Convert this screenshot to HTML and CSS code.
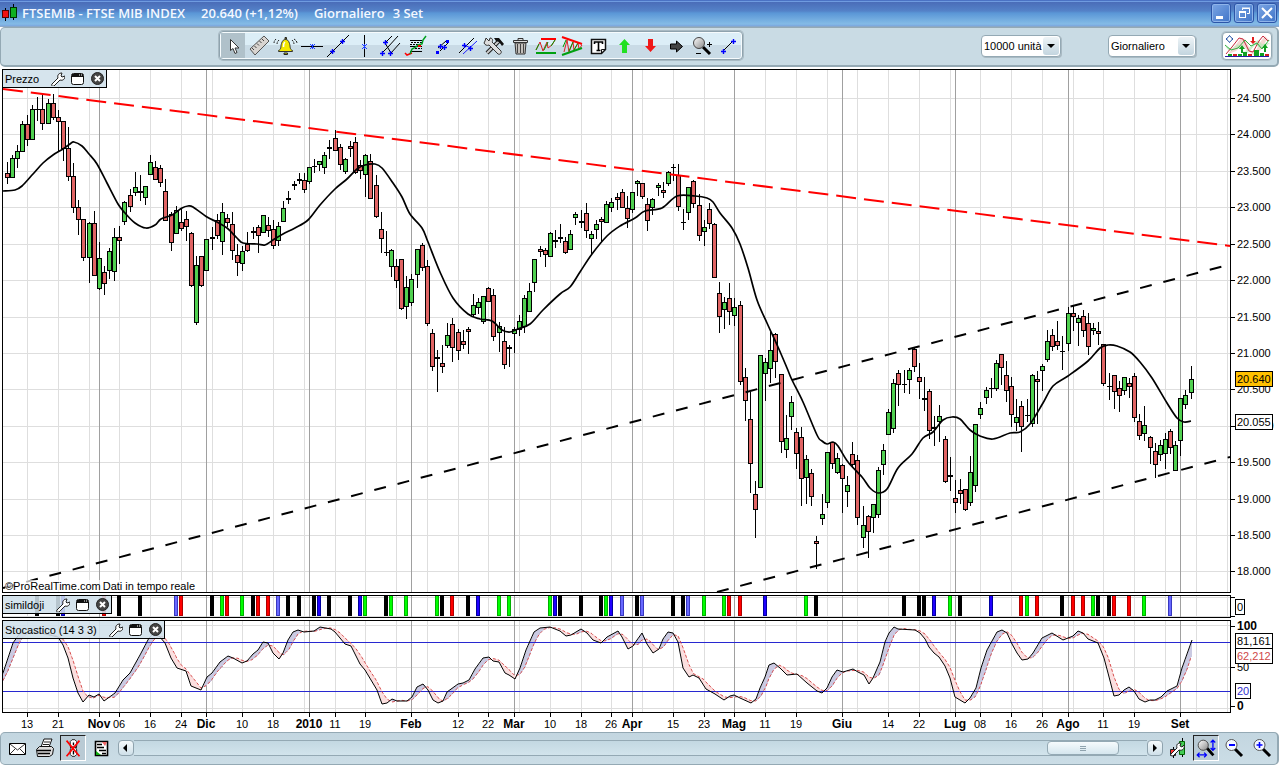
FILE: index.html
```html
<!DOCTYPE html>
<html lang="it">
<head>
<meta charset="utf-8">
<title>FTSEMIB - FTSE MIB INDEX</title>
<link rel="stylesheet" href="styles.css">
</head>
<body>
<svg class="defs" aria-hidden="true">
  <defs>
    <g id="plus" stroke="#0000ff" fill="none"><path d="M-2 .5h5M.5-2v5" stroke-width="1.4"/></g>
    <g id="star" stroke="#2040ff" fill="none"><path d="M-2-2l5 5M3-2l-5 5M.5-2v5"/></g>
    <g id="wrench"><path d="M2 13l6-6c-1-3 1-5 4-5l-1 3 1 1 3-1c0 3-2 5-5 4l-6 6c-2 1-3-1-2-2z" fill="#fff" stroke="#222"/></g>
    <g id="window"><rect x="1.500" y="2.500" width="12" height="11" rx="2" fill="#fff" stroke="#111"/><path d="M2 3h11v3H2z" fill="#111"/><path d="M9 4h1M11 4h1" stroke="#fff"/></g>
    <g id="close"><circle cx="7.500" cy="7.500" r="6" fill="#444" stroke="#222"/><path d="M5 5l5 5M10 5l-5 5" stroke="#fff" stroke-width="2"/></g>
    <linearGradient id="lens" x1="0" y1="0" x2="1" y2="1"><stop offset="0" stop-color="#fff"/><stop offset="1" stop-color="#888"/></linearGradient>
  </defs>
</svg>

<header class="titlebar">
  <svg class="app-icon" width="18" height="20" viewBox="0 0 18 20"><path d="M3.500 5v13M11.500 1v16" stroke="#000"/><rect x=".5" y="7.500" width="6" height="7" fill="#f01010" stroke="#500"/><rect x="8.500" y="4.500" width="6" height="10" fill="#10b020" stroke="#030"/></svg>
  <h1 class="title"><span>FTSEMIB - FTSE MIB INDEX</span><span>20.640 (+1,12%)</span><span>Giornaliero</span></h1>
  <span class="title date">3 Set</span>
  <div class="window-buttons">
    <button class="win" aria-label="Riduci"><svg width="18" height="18" viewBox="0 0 18 18"><path d="M4 13.500h7" stroke="#fff" stroke-width="3"/></svg></button>
    <button class="win" aria-label="Ripristina"><svg width="18" height="18" viewBox="0 0 18 18" fill="none" stroke="#fff"><path d="M7.500 6V4.500h7v5H12M7 4h8" /><rect x="4.500" y="8.500" width="6" height="5"/><path d="M4 8h7" stroke-width="2"/></svg></button>
    <button class="win" aria-label="Chiudi"><svg width="18" height="18" viewBox="0 0 18 18"><path d="M4 4l10 10M14 4L4 14" stroke="#fff" stroke-width="2"/></svg></button>
  </div>
</header>

<nav class="toolbar">
  <div class="tools">
    <button class="tool on" aria-label="Puntatore"><svg viewBox="0 0 26 25"><path d="M9.500 6.500v11l2.500-2 2 5 2-1-2-4.500h4z" fill="#fff" stroke="#333"/></svg></button>
    <button class="tool" aria-label="Righello"><svg viewBox="0 0 26 25"><path d="M3 16L17 3l5 5L8 22z" fill="#d8d4d0" stroke="#555"/><path d="M5 15l2 2M7.500 13l2 2M10 10.500l2 2M12.500 8l2 2M15 6l2 2" stroke="#444"/></svg></button>
    <button class="tool" aria-label="Allarme"><svg viewBox="0 0 26 25"><path d="M5.500 17.500c3-1 2-4 3-7 1-3 2-4 4-4s3 1 4 4c1 3 0 6 3 7v1h-14z" fill="#f4e800" stroke="#333"/><path d="M10.500 14c0-3 0-4 1.500-5" stroke="#fff" stroke-width="1.500" fill="none"/><path d="M12 4.500h1.500V6H12zM11 20h3.500v1.500H11z" fill="#dd0" stroke="#222"/><path d="M6 7c-1 1-2 2-2 4M3 6C2 7 1 8 1 10M19 7c1 1 2 2 2 4M21 6c2 1 3 3 3 4" fill="none" stroke="#222" stroke-dasharray="2 1"/></svg></button>
    <button class="tool" aria-label="Linea orizzontale"><svg viewBox="0 0 26 25"><path d="M2 13.500h22" stroke="#000"/><use href="#star" x="13" y="13"/></svg></button>
    <button class="tool" aria-label="Linea di tendenza"><svg viewBox="0 0 26 25"><path d="M2 24L24 2" stroke="#000"/><use href="#plus" x="7" y="18"/><use href="#plus" x="17" y="8"/></svg></button>
    <button class="tool" aria-label="Linea verticale"><svg viewBox="0 0 26 25"><path d="M13.500 2v22" stroke="#000"/><use href="#star" x="13" y="13"/></svg></button>
    <button class="tool" aria-label="Forchetta"><svg viewBox="0 0 26 25"><path d="M8 10l7-7M11 14L21 3M5 20l6-6M14 20L23 10M8 10l6 10" stroke="#000" fill="none"/><use href="#plus" x="8" y="9"/><use href="#plus" x="5" y="20"/><use href="#plus" x="13" y="20"/></svg></button>
    <button class="tool" aria-label="Ritracciamenti"><svg viewBox="0 0 26 25"><path d="M7 7.500h12M7 13.500h12M7 18.500h12" stroke="#000"/><path d="M8 9.500h11M7 11.500h10M9 15.500h10" stroke="#000" stroke-dasharray="2 1"/><path d="M2 20l2 2 5-2" stroke="#f00" stroke-width="1.500" fill="none"/><path d="M7 21l2-5 4-2 2-2 4-1 1-4 3-4" stroke="#00a020" stroke-width="1.500" fill="none"/><path d="M15 13h3" stroke="#f00" stroke-width="2"/></svg></button>
    <button class="tool" aria-label="Segmento"><svg viewBox="0 0 26 25"><path d="M9 15l8-7M11 18l8-8" stroke="#000"/><path d="M17 7h3v3h-3zM7 18h3v3H7z" fill="#00f"/><use href="#plus" x="11" y="13"/><use href="#plus" x="15" y="14"/></svg></button>
    <button class="tool" aria-label="Parallele"><svg viewBox="0 0 26 25"><path d="M4 20L19 5" stroke="#000"/><path d="M8 21L22 8" stroke="#22f"/><path d="M9 12l7 3" stroke="#22f"/><use href="#plus" x="9" y="12"/><use href="#plus" x="15" y="15"/></svg></button>
    <button class="tool" aria-label="Impostazioni"><svg viewBox="0 0 26 25"><path d="M6 20L18 8" stroke="#222" stroke-width="4"/><path d="M6 20L18 8" stroke="#ccc" stroke-width="2"/><path d="M13 5l5 0 5 6-2 2-3-4-3-1z" fill="#111"/><path d="M4 8l1-3 3 3 1-3c3 0 3 3 2 4l9 9c1 2-1 4-3 3l-9-9c-2 1-4 0-5-2z" fill="#ddd" stroke="#333"/></svg></button>
    <button class="tool" aria-label="Elimina"><svg viewBox="0 0 26 25"><path d="M8 10h11l-1 11H9z" fill="#c4c0bc" stroke="#333"/><path d="M6.500 7.500h14v2h-14zM11 7V5.500h5V7" fill="#ddd" stroke="#333"/><path d="M10.500 11v9M13.500 11v9M16.500 11v9" stroke="#444"/></svg></button>
    <button class="tool" aria-label="Supporti e resistenze"><svg viewBox="0 0 26 25"><path d="M3 17l4-8 3 9 4-9 1 6 4-3 3-5" stroke="#d22" fill="none"/><path d="M3 17l3-6M11 17l4-8M18 13l4-6" stroke="#090"/><path d="M8 6h15" stroke="#f00" stroke-width="2"/><path d="M3 20h20" stroke="#00a010" stroke-width="2"/></svg></button>
    <button class="tool" aria-label="Triangoli"><svg viewBox="0 0 26 25"><path d="M5 19l3-12 2 12 4-10 1 8 4-7 1 6 3-4" stroke="#d22" fill="none"/><path d="M4 14l3-7M10 18l4-9M15 17l4-7" stroke="#090"/><path d="M3 4l20 7" stroke="#f00" stroke-width="2"/><path d="M3 22l20-7" stroke="#00a010" stroke-width="2"/></svg></button>
    <button class="tool" aria-label="Testo"><svg viewBox="0 0 26 25"><path d="M6.500 6.500h14v10l-4 4h-10z" fill="#fff" stroke="#111" stroke-width="1.500"/><path d="M16.500 20v-3.500H20" fill="none" stroke="#111"/><path d="M9.500 11V9h8v2M13.500 9v8M11.500 17.500h4" fill="none" stroke="#000" stroke-width="1.600"/></svg></button>
    <button class="tool" aria-label="Freccia su"><svg viewBox="0 0 26 25"><path d="M13.500 6l5.500 6h-3v8h-5v-8H8z" fill="#22e022"/></svg></button>
    <button class="tool" aria-label="Freccia giù"><svg viewBox="0 0 26 25"><path d="M13.500 19L8 13h3V6h5v7h3z" fill="#f01818"/></svg></button>
    <button class="tool" aria-label="Freccia destra"><svg viewBox="0 0 26 25"><path d="M7.500 11h6V8l6 5.500-6 5.500v-3h-6z" fill="#444" stroke="#000"/></svg></button>
    <button class="tool" aria-label="Zoom"><svg viewBox="0 0 26 25"><path d="M14 14l7 7" stroke="#000" stroke-width="3"/><circle cx="10" cy="10" r="5.500" fill="url(#lens)" stroke="#444"/><path d="M18 11.500h5M20.500 9v5M7 20.500h5" stroke="#000"/></svg></button>
    <button class="tool" aria-label="Misura"><svg viewBox="0 0 26 25"><path d="M8 18l10-10" stroke="#000"/><use href="#plus" x="8" y="18"/><use href="#plus" x="18" y="8"/></svg></button>
  </div>
  <label class="pick units"><select aria-label="Unità"><option>10000 unità</option></select><span class="arrow"></span></label>
  <label class="pick period"><select aria-label="Periodo"><option>Giornaliero</option></select><span class="arrow"></span></label>
  <button class="indicators" aria-label="Aggiungi indicatore">
    <svg width="46" height="24" viewBox="0 0 46 24"><path d="M4 20l6-7 7-9 4 1 6 12 4 1 6-11 4-5 5 5-4 0-5 9-7 5-6-4-6-6-6 6z" fill="#f0c8c0" opacity=".7"/><path d="M1 12l6 3 7-5 6 8 7-6 7-6 4 4 8-1-8 6-7-4-7 8-6-3-7-3-6 4z" fill="#b8e8b8" opacity=".7"/><path d="M2 20l6-7 7-9 4 1 6 12 4 1 6-11 4-5 5 5" fill="none" stroke="#c8283c"/><path d="M1 11l6 5 7-2 7-8 6 6 6-3 5 6 7-9" fill="none" stroke="#30b040"/><path d="M5.500 1.500l1.500 2 2 1.500-2 1.500-1.500 2L4 6.500 2 5l2-1.500z" fill="#fff" stroke="#1848a0"/><path d="M18 11l3 4h-2v4h-2v-4h-2zM41 10l3 4h-2v4h-2v-4h-2z" fill="#10a020"/><path d="M29 10l-3-3h2V3h2v4h2z" fill="#e02020"/><path d="M4 20h4v2H4zM14 20h4v2h-4zM19 18h4v4h-4zM30 16h5v6h-5zM36 19h4v3h-4z" fill="#10a020"/><path d="M9 20h4v2H9zM24 20h4v2h-4zM41 20h4v2h-4z" fill="#d02020"/><path d="M1 22.500h44" stroke="#2020a0"/></svg>
  </button>
</nav>

<main class="charts">
  <section class="row price">
    <div class="panel">
      <svg id="price" viewBox="3 70 1227 522" preserveAspectRatio="none"></svg>
      <div class="chip"><span>Prezzo</span><button aria-label="Configura"><svg viewBox="0 0 15 15"><use href="#wrench"/></svg></button><button aria-label="Finestra"><svg viewBox="0 0 15 15"><use href="#window"/></svg></button><button aria-label="Chiudi"><svg viewBox="0 0 15 15"><use href="#close"/></svg></button></div>
      <p class="credit"><span>©ProRealTime.com</span><span>Dati in tempo reale</span></p>
    </div>
    <div class="yaxis" id="price-axis"></div>
  </section>
  <section class="row doji">
    <div class="panel">
      <svg id="doji" viewBox="3 596 1227 21" preserveAspectRatio="none"></svg>
      <div class="chip"><span>simildoji</span><button aria-label="Configura"><svg viewBox="0 0 15 15"><use href="#wrench"/></svg></button><button aria-label="Finestra"><svg viewBox="0 0 15 15"><use href="#window"/></svg></button><button aria-label="Chiudi"><svg viewBox="0 0 15 15"><use href="#close"/></svg></button></div>
    </div>
    <div class="yaxis" id="doji-axis"></div>
  </section>
  <section class="row stoch">
    <div class="panel">
      <svg id="stoch" viewBox="3 621 1227 91" preserveAspectRatio="none"></svg>
      <div class="chip"><span>Stocastico (14 3 3)</span><button aria-label="Configura"><svg viewBox="0 0 15 15"><use href="#wrench"/></svg></button><button aria-label="Finestra"><svg viewBox="0 0 15 15"><use href="#window"/></svg></button><button aria-label="Chiudi"><svg viewBox="0 0 15 15"><use href="#close"/></svg></button></div>
    </div>
    <div class="yaxis" id="stoch-axis"></div>
  </section>
  <div class="row"><div class="xaxis" id="xaxis"></div></div>
</main>

<footer class="bottombar">
  <button class="foot" aria-label="Invia"><svg viewBox="0 0 26 26"><path d="M5.500 8.500h16v11h-16z" fill="#fff" stroke="#000"/><path d="M6 9l7.500 6L21 9M6 19l5-5M21 19l-5-5" fill="none" stroke="#333"/></svg></button>
  <button class="foot" aria-label="Stampa"><svg viewBox="0 0 26 26"><path d="M9 12l3-8h8l-3 8z" fill="#fff" stroke="#111"/><path d="M12 7h6M11 9.500h6" stroke="#222"/><path d="M4.500 14.500l3-3h12l2 2-1 6-3 2h-12z" fill="#ddd" stroke="#111"/><path d="M5 15.500h14M6 18.500h12" stroke="#000" stroke-width="1.400"/></svg></button>
  <button class="foot on" aria-label="Ordini disattivati"><svg viewBox="0 0 26 26"><path d="M10 6l2-2h3l2 2v5l-1 2 1 2v5l-2 2h-3l-2-2v-5l1-2-1-2z" fill="#fff" stroke="#111"/><path d="M13.500 7v3M13.500 16v4M10 12h7" stroke="#000" stroke-width="1.500"/><path d="M6 5l14 17M20 5L6 22" stroke="#f00" stroke-width="1.800"/></svg></button>
  <button class="foot report" aria-label="Rapporto"><svg viewBox="0 0 26 26"><path d="M6.500 6.500h12v14h-12z" fill="#fff" stroke="#000" stroke-width="1.600"/><path d="M8 9.500h5M8 12.500h7M10 15.500h7M13 18.500h4" stroke="#000" stroke-width="1.400"/><path d="M13 7h5l-2 4z" fill="#e66"/><path d="M7 20v-4l5 4z" fill="#1a1"/></svg></button>
  <div class="scroller">
    <button class="step" aria-label="Indietro"><svg viewBox="0 0 14 14"><path d="M8 3v8L4 7z"/></svg></button>
    <div class="track"><span class="thumb"></span></div>
    <button class="step" aria-label="Avanti"><svg viewBox="0 0 14 14"><path d="M5 3v8l4-4z"/></svg></button>
  </div>
  <button class="foot" aria-label="Colori"><svg viewBox="0 0 26 26"><path d="M17.500 3v19M8.500 12v11" stroke="#000"/><path d="M14.500 6.500h5v13h-5z" fill="#4c5" stroke="#060"/><path d="M5.500 14.500h5v6h-5z" fill="#f33" stroke="#222"/><path d="M6 19l6-6c-1-4 1-5 4-5l-1 3 2 1 2-2c1 4-2 6-5 5l-6 6c-2 0-3-1-2-2z" fill="#fff" stroke="#222"/></svg></button>
  <button class="foot on" aria-label="Adatta zoom"><svg viewBox="0 0 26 26"><path d="M14 13l7 8" stroke="#000" stroke-width="3"/><circle cx="10" cy="10" r="5.500" fill="url(#lens)" stroke="#444"/><path d="M4 20.500h9M6 18l-2.500 2.500L6 23M11 18l2.500 2.500L11 23M20.500 5v10M18 7l2.500-2.500L23 7M18 13l2.500 2.500L23 13" fill="none" stroke="#00f" stroke-width="1.400"/></svg></button>
  <button class="foot" aria-label="Riduci zoom"><svg viewBox="0 0 26 26"><path d="M14 14l7 7" stroke="#000" stroke-width="3"/><circle cx="10.500" cy="10" r="5.500" fill="#f4f8ff" stroke="#555"/><path d="M8 10h6" stroke="#00f" stroke-width="2"/></svg></button>
  <button class="foot" aria-label="Aumenta zoom"><svg viewBox="0 0 26 26"><path d="M14 14l7 7" stroke="#000" stroke-width="3"/><circle cx="10.500" cy="10" r="5.500" fill="#f4f8ff" stroke="#555"/><path d="M7.500 10h6M10.500 7v6" stroke="#00f" stroke-width="1.600"/></svg></button>
</footer>
<script src="chart.js"></script>
</body>
</html>
```

FILE: styles.css
```css
* { box-sizing: border-box; }
html, body { height: 100%; }
body {
  margin: 0;
  display: flex;
  flex-direction: column;
  background: #fff;
  color: #000;
  font: 11px/14px "Liberation Sans", Arial, sans-serif;
}
button { margin: 0; padding: 0; border: 0; background: none; font: inherit; color: inherit; display: block; }
svg { display: block; }
.defs { position: absolute; width: 0; height: 0; }

.titlebar {
  flex: none;
  height: 27px;
  display: flex;
  align-items: center;
  gap: 2px;
  padding: 0 2px;
  border-bottom: 1px solid #8aa8c8;
  background: linear-gradient(#4a72c4 0 1px, #6f9be0 1px 2px, #4a6cb8 2px, #5482c8 11px, #5a96d6 13px, #84bbe6 24px, #7ba6de 26px);
}
.title {
  margin: 0;
  display: flex;
  gap: 16px;
  color: #f4f8ff;
  font: 600 13px/18px "Open Sans", "Noto Sans", sans-serif;
  white-space: pre;
}
.date { margin-left: 6px; }
.window-buttons { margin-left: auto; display: flex; gap: 3px; }
.win { width: 20px; height: 20px; border: 1px solid #2c55a8; border-radius: 3px; background: linear-gradient(135deg, #7ca6e4, #3f74c8); box-shadow: inset 0 0 0 1px #8fb4ea; }

.toolbar {
  flex: none;
  height: 40px;
  display: flex;
  align-items: center;
  padding: 0 5px 2px 218px;
  border: 2px solid #94a9b4;
  border-width: 1px 2px 2px 1px;
  border-radius: 5px;
  background: #c9dbe4;
}
.tools {
  display: flex;
  border: 1px solid #8fa3ae;
  border-radius: 4px;
  box-shadow: inset 0 0 0 1px #f6fbfd, 0 0 0 1px #a9bac3;
  background: linear-gradient(#dceef7 50%, #c9dbe6 50%);
  padding: 1px;
}
.tool { width: 26px; height: 25px; }
.tool svg { width: 26px; height: 25px; }
.tool.on { background: linear-gradient(90deg, #b0c1ca 24px, transparent 24px); }
.pick {
  display: grid;
  align-items: center;
  height: 22px;
  border: 1px solid #94a9b4;
  border-radius: 4px;
  background: #fff;
  box-shadow: 1px 1px 0 #a9bac3;
}
.pick select {
  grid-area: 1 / 1;
  appearance: none;
  width: 100%;
  height: 20px;
  border: 0;
  padding: 0 0 0 2px;
  background: none;
  font: inherit;
  color: #000;
}
.arrow {
  grid-area: 1 / 1;
  justify-self: end;
  width: 16px;
  height: 18px;
  margin-right: 1px;
  border-radius: 3px;
  background: linear-gradient(#eef4f7, #c3d5df);
  pointer-events: none;
  display: grid;
  place-items: center;
}
.arrow::before { content: ""; border: 4px solid transparent; border-top-color: #000; border-bottom: 0; }
.units { width: 80px; margin-left: auto; margin-right: 47px; }
.period { width: 88px; margin-right: 26px; }
.indicators { padding: 1px; border: 1px solid #94a9b4; border-radius: 4px; background: #fff; box-shadow: 0 0 0 1px #b5c5ce; }

.charts { flex: 1; min-height: 0; display: flex; flex-direction: column; gap: 2px; padding: 2px 0 0 2px; }
.row { display: grid; grid-template-columns: minmax(0, 1fr) 48px; }
.price { flex: 1; min-height: 0; }
.doji { height: 23px; }
.stoch { height: 93px; margin-bottom: -2px; }
.panel { position: relative; border: 1px solid #000; min-height: 0; overflow: hidden; }
.panel > svg { width: 100%; height: 100%; position: absolute; inset: 0; }
.chip {
  position: absolute;
  top: 0;
  left: 0;
  height: 18px;
  display: flex;
  align-items: center;
  gap: 5px;
  padding: 0 1px 0 2px;
  border-right: 1px solid #000;
  border-bottom: 1px solid #000;
  background: #d0e0ebe0;
}
.chip span { margin-right: 6px; }
.chip svg { width: 15px; height: 15px; }
.credit { position: absolute; left: 2px; bottom: 0; margin: 0; line-height: 12px; display: flex; gap: 2px; }
.credit span { background: #ffffffb0; }

.yaxis { position: relative; }
.tick { position: absolute; left: 0; height: 14px; margin-top: -7px; padding-left: 6px; }
.tick::before { content: ""; position: absolute; left: 0; top: 7px; width: 4px; height: 1px; background: #000; }
.tick.strong { font-weight: bold; font-size: 12px; }
.tag { position: absolute; left: 4px; height: 16px; margin-top: -8px; padding: 0 1px; border: 1px solid #000; background: #fff; }
.tag.gold { background: #ffc000; }
.tag.red { color: #d04848; }
.tag.blue { color: #3030d0; }

.xaxis { position: relative; height: 19px; }
.date-tick { position: absolute; top: 0; width: 40px; margin-left: -20px; padding-top: 4px; text-align: center; }
.date-tick::before { content: ""; position: absolute; left: 20px; top: 0; width: 1px; height: 4px; background: #000; }
.date-tick.strong { font-weight: bold; font-size: 12px; }

.bottombar {
  flex: none;
  height: 33px;
  display: flex;
  align-items: center;
  gap: 2px;
  padding: 0 2px 2px 3px;
  border: 1px solid #94a9b4;
  border-right-width: 2px;
  border-radius: 5px;
  background: linear-gradient(#c3d6e0, #cbdde6);
}
.foot { width: 26px; height: 26px; }
.foot svg { width: 26px; height: 26px; }
.foot.on { border: 1px solid; border-color: #222 #fff #fff #222; background: #b9cad4; }
.foot.on svg { width: 24px; height: 24px; }
.report { margin: 0 1px; }
.scroller { flex: 1; display: flex; align-items: center; }
.step { width: 16px; height: 16px; border: 1px solid #8fa3ae; border-radius: 4px; background: linear-gradient(#f4f9fb, #cfe0e9); }
.step svg { width: 14px; height: 14px; }
.track { flex: 1; height: 16px; border: solid #94a9b4; border-width: 1px 0; background: linear-gradient(#c3d8e2, #d2e4ec); display: flex; align-items: center; justify-content: flex-end; padding-right: 28px; }
.thumb {
  width: 72px;
  height: 14px;
  border: 1px solid #94a9b4;
  border-radius: 4px;
  background: linear-gradient(#8fa3ae, #8fa3ae) center 4px / 6px 1px no-repeat, linear-gradient(#8fa3ae, #8fa3ae) center 6px / 6px 1px no-repeat, linear-gradient(#8fa3ae, #8fa3ae) center 8px / 6px 1px no-repeat, linear-gradient(#f6fbfd, #d5e6ee);
}
```

FILE: chart.js
```js
// Candles: x, high, body top, body bottom, low, kind (g up, r down, d doji, t thin doji)
const CANDLES = `
7 162 173 178 184 r|12 155 158 178 178 g|17 145 151 159 168 g|22 121 124 152 152 g|27 115 124 140 146 r|32 105 109 140 140 g|37 97 109 109 121 t|42 93 109 124 130 r|48 99 103 124 124 g|53 94 103 118 120 r|58 110 117 122 152 r|63 121 121 149 161 r|68 127 148 177 181 r|73 163 176 208 213 r|78 200 207 220 235 r|83 219 219 258 261 r|89 222 223 258 283 g|94 211 223 276 276 r|99 242 258 289 290 g|104 266 272 284 295 r|109 248 251 271 279 g|114 228 237 272 281 g|119 226 237 241 264 r|124 201 202 222 225 g|130 189 195 207 212 r|135 172 187 193 196 g|140 175 192 192 201 d|145 186 186 198 205 g|150 155 162 175 175 g|155 161 167 180 180 r|160 165 168 183 187 r|165 179 191 221 221 r|171 212 214 243 251 r|176 206 210 234 234 g|181 209 222 229 231 r|186 211 219 227 241 r|191 232 233 286 287 r|196 256 265 323 325 g|201 256 256 286 287 r|206 239 239 271 271 g|212 227 238 238 250 d|217 214 220 236 239 r|222 203 212 242 255 g|227 214 218 223 227 r|232 212 224 251 260 r|237 244 255 263 276 r|242 246 251 264 271 g|247 232 244 251 252 r|253 227 232 232 239 d|258 225 227 236 253 r|263 215 215 233 233 g|268 217 225 231 237 r|273 220 229 246 249 r|278 222 226 241 246 g|283 201 208 222 222 g|288 191 199 199 204 d|294 181 185 185 190 d|299 173 180 180 184 d|304 173 180 190 193 r|309 167 167 182 184 g|314 159 166 166 173 t|319 161 161 165 171 g|324 152 155 168 174 g|329 140 148 148 159 d|335 130 138 151 151 r|340 144 147 165 170 r|345 158 159 172 174 g|350 141 146 149 157 r|355 137 142 173 174 r|360 160 165 171 179 r|365 154 155 175 197 g|370 154 161 199 199 r|376 175 185 217 218 r|381 212 229 239 253 r|386 231 252 252 256 t|391 249 250 267 277 g|396 259 266 281 288 r|401 259 259 309 310 r|406 276 287 307 319 g|411 274 279 303 306 g|417 249 249 275 288 g|422 243 245 268 271 r|427 260 266 324 326 r|432 329 333 367 371 r|437 350 358 358 392 d|442 345 363 367 373 r|447 323 335 346 348 g|452 318 324 348 362 r|458 329 332 351 360 r|463 330 341 345 349 r|468 327 329 332 354 r|473 294 305 315 317 g|478 298 302 308 314 g|483 296 296 322 324 g|488 287 288 302 302 r|493 289 295 337 341 r|499 322 326 333 352 g|504 327 341 365 369 r|509 345 348 348 367 d|514 327 329 334 353 g|519 315 321 330 336 g|524 295 298 327 333 g|529 283 291 312 312 g|534 259 259 283 292 g|540 246 249 252 257 r|545 248 250 255 267 r|550 232 233 257 257 g|555 230 241 241 248 d|560 224 238 238 243 d|565 237 241 253 254 r|570 230 234 250 250 g|575 212 214 218 225 g|581 210 222 222 228 d|586 203 213 231 238 r|591 231 234 239 254 g|596 220 224 230 239 g|601 217 219 222 242 r|606 201 204 223 223 g|611 198 202 208 212 g|617 193 197 200 210 r|622 189 192 208 208 r|627 196 208 219 228 r|632 192 192 210 213 g|637 180 181 184 196 g|642 183 183 197 199 r|647 198 204 221 231 r|652 198 199 208 215 g|658 183 185 188 196 g|663 182 190 193 198 r|668 171 172 184 186 g|673 164 167 167 181 t|678 164 175 207 211 r|683 209 222 222 230 t|688 187 187 213 220 g|693 180 181 204 208 r|699 194 205 236 241 r|704 220 227 232 246 g|709 203 209 224 229 r|714 223 224 278 278 r|719 282 293 317 333 r|724 297 302 310 329 g|729 283 298 312 325 r|734 298 307 316 326 g|740 301 305 382 385 r|745 368 377 401 421 r|750 392 419 464 493 r|755 481 494 510 538 r|760 355 355 488 488 g|765 358 362 374 401 g|770 332 350 369 383 g|775 333 334 362 378 r|781 374 374 442 453 r|786 415 438 450 458 g|791 396 402 417 430 g|796 428 432 454 469 r|801 427 437 479 506 r|806 455 459 478 504 g|811 469 473 497 506 r|816 536 541 544 569 r|822 494 514 519 525 g|827 452 452 503 508 g|832 442 442 464 469 r|837 453 458 473 474 g|842 464 465 479 513 r|847 476 485 492 507 g|852 442 454 465 467 r|857 455 460 518 525 r|863 506 525 538 548 g|868 515 516 532 558 r|873 504 504 518 533 g|878 467 470 515 518 g|883 444 450 465 475 g|888 409 412 435 435 g|893 379 383 429 433 g|898 370 373 385 406 r|904 370 384 384 393 t|909 368 370 380 394 g|914 347 349 367 372 r|919 363 377 382 399 r|924 377 399 399 411 d|929 389 391 431 439 r|934 416 428 428 446 d|939 405 416 422 442 g|945 436 439 482 483 r|950 457 476 476 491 d|955 480 498 503 513 r|960 479 490 494 504 r|965 489 489 510 511 r|970 456 472 503 506 g|975 424 424 486 492 g|980 402 408 415 419 g|986 387 390 398 404 g|991 378 388 388 398 t|996 360 363 389 391 g|1001 354 354 368 385 r|1006 361 375 391 402 r|1011 377 386 415 427 r|1016 399 417 423 431 g|1021 401 406 427 452 r|1027 399 415 415 422 t|1032 374 375 424 427 g|1037 371 379 382 424 r|1042 364 366 371 391 g|1047 330 341 360 362 g|1052 329 335 347 351 r|1057 321 341 346 350 r|1062 336 351 351 370 t|1068 307 313 344 351 g|1073 306 313 317 331 r|1078 315 318 323 346 g|1083 310 316 331 337 r|1088 313 323 347 355 r|1093 323 328 331 335 g|1098 322 331 334 345 r|1103 344 344 384 386 r|1109 373 386 386 400 t|1114 375 375 392 409 r|1119 381 388 396 412 r|1124 377 377 391 395 g|1129 378 383 387 398 r|1134 373 376 418 422 r|1139 414 421 436 440 r|1144 406 425 434 441 g|1150 436 437 448 464 r|1155 443 451 465 478 r|1160 440 445 455 461 g|1165 433 439 454 469 g|1170 429 431 448 454 r|1175 441 445 471 471 g|1180 398 398 441 456 g|1185 390 395 405 409 g|1191 366 379 393 399 g`;

const AVERAGE = "3,191 15,190 22,186 33,174 43,163 53,155 63,149 70,144 74,142 82,146 89,154 97,164 107,183 118,204 125,213 135,223 146,228 155,225 161,219 172,215 182,208 188,206 193,207 207,217 217,222 227,228 237,238 243,243 257,244 265,245 273,240 283,234 295,228 308,220 320,205 335,189 347,179 357,169 365,165 375,164 382,168 393,183 402,197 410,214 422,228 428,242 440,272 453,298 468,314 480,319 492,321 502,330 510,332 518,329 530,324 543,310 560,294 570,287 580,272 592,254 607,236 620,226 635,218 645,211 662,208 677,196 695,196 707,198 713,202 720,213 732,228 740,244 748,268 757,300 767,323 778,347 787,368 792,380 803,402 817,435 822,441 827,444 833,442 838,446 848,462 862,477 870,488 878,493 887,489 898,468 912,454 923,438 933,432 943,420 952,417 960,419 970,430 980,436 993,439 1010,433 1020,432 1030,424 1043,403 1053,386 1068,376 1088,361 1100,348 1108,345 1117,346 1130,352 1140,362 1152,378 1167,403 1177,418 1184,422 1191,421";

const STOCH = "-12,690 -7,688 3,673 13,643 20,633 33,632 45,634 58,637 63,645 68,658 73,678 78,693 83,702 89,695 94,697 99,694 104,701 115,693 123,680 130,673 140,655 149,638 153,634 159,636 165,643 171,658 177,668 186,671 191,686 201,690 207,677 212,673 220,662 228,656 233,658 242,663 247,661 253,654 258,650 263,642 268,643 273,653 279,659 283,653 288,640 293,632 298,630 304,632 314,631 320,627 331,629 335,632 345,644 351,646 360,664 365,670 377,690 382,704 387,703 392,699 397,701 407,701 412,697 417,687 423,684 428,690 433,700 438,703 443,701 447,692 458,684 463,683 469,680 475,669 483,658 489,657 493,661 499,662 505,673 509,675 515,679 520,668 526,650 534,632 540,628 550,627 560,631 566,636 571,635 581,629 587,633 593,640 601,643 607,637 618,631 622,637 628,649 633,646 637,640 642,633 647,644 653,653 659,649 663,639 668,632 673,633 678,642 683,668 689,677 693,675 699,678 706,689 715,694 724,700 730,696 734,695 740,698 751,703 756,699 760,688 765,677 769,665 774,663 780,668 787,675 797,674 807,683 817,691 822,693 827,688 832,677 837,670 843,672 853,669 858,672 864,675 869,684 873,678 880,662 885,642 889,633 894,627 898,629 915,630 920,633 925,639 929,647 934,653 939,657 945,666 950,678 955,697 965,703 970,698 976,688 981,668 987,650 997,632 1002,630 1007,633 1012,644 1017,653 1022,660 1028,659 1033,653 1042,638 1052,633 1063,640 1073,636 1078,631 1083,633 1088,639 1098,643 1104,658 1108,673 1114,696 1119,695 1124,690 1129,687 1134,691 1139,699 1145,702 1150,700 1155,700 1161,697 1167,691 1177,686 1182,668 1192,640";

const DOJI = "37k 58k 63b 104r 119k 140k 176l 181r 212k 222g 227r 242g 253k 258r 268r 278l 288k 299k 314k 319b 329k 350k 360b 365g 386k 391g 406g 437g 442k 452r 468k 478b 499g 509g 550g 555b 560k 581k 601k 606g 611b 622l 637k 642l 673k 683k 688l 704g 724g 729r 740r 765b 806g 816k 904k 919k 924k 934b 950g 960k 991b 1021r 1027g 1037r 1062k 1073r 1083r 1093g 1098k 1109k 1114r 1129r 1144g 1170l";

const LIGHT = [27, 58, 89, 119, 150, 181, 212, 242, 273, 304, 335, 365, 396, 427, 458, 488, 519, 550, 581, 611, 642, 673, 704, 765, 796, 827, 857, 888, 919, 950, 980, 1011, 1042, 1073, 1103, 1134, 1165, 1196, 1227];
const MONTHS = [99, 206, 309, 411, 514, 632, 734, 842, 955, 1068, 1180];
const DATES = "27:13 58:21 99:Nov 119:06 150:16 181:24 206:Dic 242:10 273:18 309:2010 335:11 365:19 411:Feb 458:12 488:22 514:Mar 550:10 581:18 611:26 632:Apr 673:15 704:23 734:Mag 765:11 796:19 842:Giu 888:14 919:22 955:Lug 980:08 1011:16 1042:26 1068:Ago 1103:11 1134:19 1180:Set";
const LEVELS = [98, 134, 171, 207, 244, 280, 317, 353, 389, 426, 462, 499, 535, 571];

const CRISP = 'shape-rendering="crispEdges"';
const line = (x1, y1, x2, y2, attrs) => `<path d="M${x1} ${y1}L${x2} ${y2}" fill="none" ${attrs}/>`;

function grid(top, bottom, rows) {
  return rows.map(y => line(3, y + .5, 1230, y + .5, `stroke="#dedede" ${CRISP}`)).join("") +
    LIGHT.map(x => line(x + .5, top, x + .5, bottom, `stroke="#dedede" ${CRISP}`)).join("") +
    MONTHS.map(x => line(x + .5, top, x + .5, bottom, `stroke="#a0a0a0" ${CRISP}`)).join("");
}

function candle(text) {
  const [x, high, top, bottom, low, kind] = text.trim().split(" ");
  const c = +x + .5;
  let out = line(c, high, c, low, `stroke="#000" ${CRISP}`);
  if (kind === "d") out += `<rect x="${x - 2}" y="${top - 1}" width="5" height="2"/>`;
  else if (kind === "t") out += `<rect x="${x - 2}" y="${top}" width="5" height="1"/>`;
  else out += `<rect x="${x - 1.5}" y="${+top + .5}" width="4" height="${Math.max(bottom - top - 1, 2)}" fill="${kind === "g" ? "#50d050" : "#e06464"}" stroke="#000" ${CRISP}/>`;
  return out;
}

// Smooth curve through the points (Catmull-Rom as cubic segments)
function smooth(points) {
  const p = points.split(" ").map(s => s.split(",").map(Number));
  const at = i => p[Math.max(0, Math.min(p.length - 1, i))];
  let d = `M${p[0]}`;
  for (let i = 0; i < p.length - 1; i++) {
    const [a, b, c, e] = [at(i - 1), at(i), at(i + 1), at(i + 2)];
    d += `C${b[0] + (c[0] - a[0]) / 6} ${b[1] + (c[1] - a[1]) / 6} ${c[0] - (e[0] - b[0]) / 6} ${c[1] - (e[1] - b[1]) / 6} ${c[0]} ${c[1]}`;
  }
  return d;
}

document.getElementById("price").innerHTML =
  grid(70, 592, LEVELS) +
  CANDLES.trim().split("|").map(candle).join("") +
  `<path d="${smooth(AVERAGE)}" fill="none" stroke="#000" stroke-width="1.700"/>` +
  line(3, 89, 1230, 246, 'stroke="#f00" stroke-width="2" stroke-dasharray="20 8"') +
  line(3, 588, 1224, 266, 'stroke="#000" stroke-width="2" stroke-dasharray="12 12"') +
  line(717, 592, 1230, 457, 'stroke="#000" stroke-width="2" stroke-dasharray="12 12"');

const DOJI_COLORS = { k: ["#000", "#000"], r: ["#f00", "#b00000"], g: ["#00ff00", "#00b000"], b: ["#2000ff", "#0000a0"], l: ["#6868ff", "#3838c0"] };
document.getElementById("doji").innerHTML =
  grid(596, 617, [597, 616]) +
  DOJI.split(" ").map(d => {
    const x = parseInt(d, 10), [fill, edge] = DOJI_COLORS[d.slice(-1)];
    return `<rect x="${x - 1.5}" y="595.5" width="3" height="20" fill="${fill}" stroke="${edge}" ${CRISP}/>`;
  }).join("");

// Slow line of the stochastic is the three-bar mean of the fast one
const fast = STOCH.split(" ").map(p => p.split(",").map(Number));
function fastAt(x) {
  if (x <= fast[0][0]) return fast[0][1];
  const i = fast.findIndex(p => p[0] >= x), [x1, y1] = fast[i], [x0, y0] = fast[i - 1];
  return y0 + (y1 - y0) * (x - x0) / (x1 - x0);
}
const slowAt = x => (fastAt(x) + fastAt(x - 5) + fastAt(x - 10)) / 3;
let bands = "", slow = "";
for (let x = 3; x <= 1191; x++) {
  const a = fastAt(x), b = slowAt(x);
  bands += `<rect x="${x}" y="${Math.min(a, b).toFixed(1)}" width="1" height="${Math.abs(a - b).toFixed(1)}" fill="${a < b ? "#cacae2" : "#fbdfdf"}" ${CRISP}/>`;
  slow += `${x},${b.toFixed(1)} `;
}
document.getElementById("stoch").innerHTML =
  grid(621, 712, [625, 667, 708]) + bands +
  line(3, 642.5, 1230, 642.5, `stroke="#2828d0" ${CRISP}`) +
  line(3, 691.5, 1230, 691.5, `stroke="#2828d0" ${CRISP}`) +
  `<polyline points="${slow}" fill="none" stroke="#d85050" stroke-dasharray="3 2"/>` +
  `<polyline points="${fast.join(" ")}" fill="none" stroke="#000"/>`;

function axis(id, top, height, items) {
  document.getElementById(id).innerHTML = items.map(([y, text, cls]) =>
    `<span class="${cls}" style="top:${(y - top) / height * 100}%">${text}</span>`).join("");
}
axis("price-axis", 69, 524, LEVELS.map((y, i) => [y, (24.5 - i / 2).toFixed(3), i === 9 ? "tick strong" : "tick"])
  .concat([[379, "20.640", "tag gold"], [422, "20.055", "tag"]]));
axis("doji-axis", 595, 23, [[597, "", "tick"], [616, "", "tick"], [607, "0", "tag"]]);
axis("stoch-axis", 620, 93, [[626, "100", "tick strong"], [667, "50", "tick"], [706, "0", "tick strong"],
  [641, "81,161", "tag"], [656, "62,212", "tag red"], [691, "20", "tag blue"]]);

document.getElementById("xaxis").innerHTML = DATES.split(" ").map(d => {
  const [x, text] = d.split(":");
  return `<span class="date-tick${MONTHS.includes(+x) ? " strong" : ""}" style="left:${(x - 2) / 1229 * 100}%">${text}</span>`;
}).join("");
```
